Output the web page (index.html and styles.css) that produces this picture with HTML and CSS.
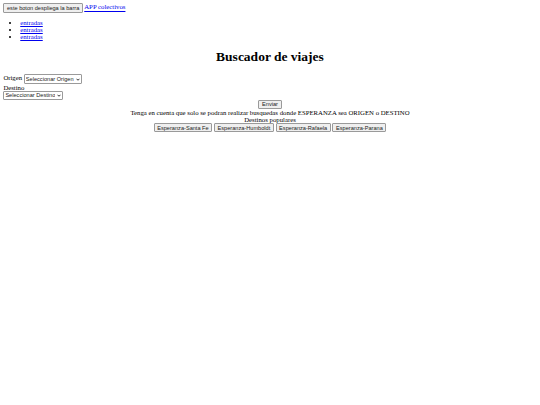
FILE: index.html
```html
<!DOCTYPE html>
<html lang="es">
<head>
<meta charset="utf-8">
<title>Buscador de viajes</title>
<link rel="stylesheet" href="styles.css">
</head>
<body class="body">
<nav class="topbar">
<button class="btn">este boton despliega la barra</button>
<a class="link" href="#">APP colectivos</a>
<ul class="menu">
<li><a class="link" href="#">entradas</a></li>
<li><a class="link" href="#">entradas</a></li>
<li><a class="link" href="#">entradas</a></li>
</ul>
</nav>
<h1 class="title">Buscador de viajes</h1>
<form class="search">
<label class="lbl">Origen</label>
<span class="selwrap"><select class="sel"><option>Seleccionar Origen</option></select><svg class="arrow" viewBox="0 0 8 5" width="4" height="3"><path d="M1 1 L4 4 L7 1" fill="none" stroke="#000" stroke-width="1.6"/></svg></span><br>
<label class="lbl">Destino</label><br>
<span class="selwrap"><select class="sel"><option>Seleccionar Destino</option></select><svg class="arrow" viewBox="0 0 8 5" width="4" height="3"><path d="M1 1 L4 4 L7 1" fill="none" stroke="#000" stroke-width="1.6"/></svg></span><br>
<div class="center">
<button class="btn" type="button">Enviar</button><br>
Tenga en cuenta que solo se podran realizar busquedas donde ESPERANZA sea ORIGEN o DESTINO
<div>Destinos populares</div>
<button class="btn" type="button">Esperanza-Santa Fe</button>
<button class="btn" type="button">Esperanza-Humboldt</button>
<button class="btn" type="button">Esperanza-Rafaela</button>
<button class="btn" type="button">Esperanza-Parana</button>
</div>
</form>
</body>
</html>
```
FILE: styles.css
```css
html {
  background: #fff;
}
.body {
  margin: 3.375px;
  font-family: "Liberation Serif", "Times New Roman", serif;
  font-size: 6.75px;
  color: #000;
}
.link {
  color: #0000ee;
}
.btn {
  font-family: "Liberation Sans", Arial, sans-serif;
  font-size: 5.625px;
  padding: 0.4px 2.6px;
  margin: 0;
  background: #efefef;
  border: 0.6px solid #9a9a9a;
  border-radius: 1px;
  color: #222;
  line-height: 1.15;
  vertical-align: baseline;
}
.menu {
  margin: 6.75px 0;
  padding-left: 16.875px;
}
.title {
  text-align: center;
  font-size: 13.5px;
  margin: 9.045px 0;
}
.selwrap {
  position: relative;
  display: inline-block;
}
.sel {
  appearance: none;
  -webkit-appearance: none;
  font-family: "Liberation Sans", Arial, sans-serif;
  font-size: 5.625px;
  padding: 0.4px 7px 0.4px 1px;
  margin: 0;
  background: #fff;
  border: 0.6px solid #9a9a9a;
  border-radius: 1px;
  color: #222;
  line-height: 1.15;
}
.arrow {
  position: absolute;
  right: 2px;
  top: 50%;
  margin-top: -1.5px;
  pointer-events: none;
}
.center {
  text-align: center;
}
```
